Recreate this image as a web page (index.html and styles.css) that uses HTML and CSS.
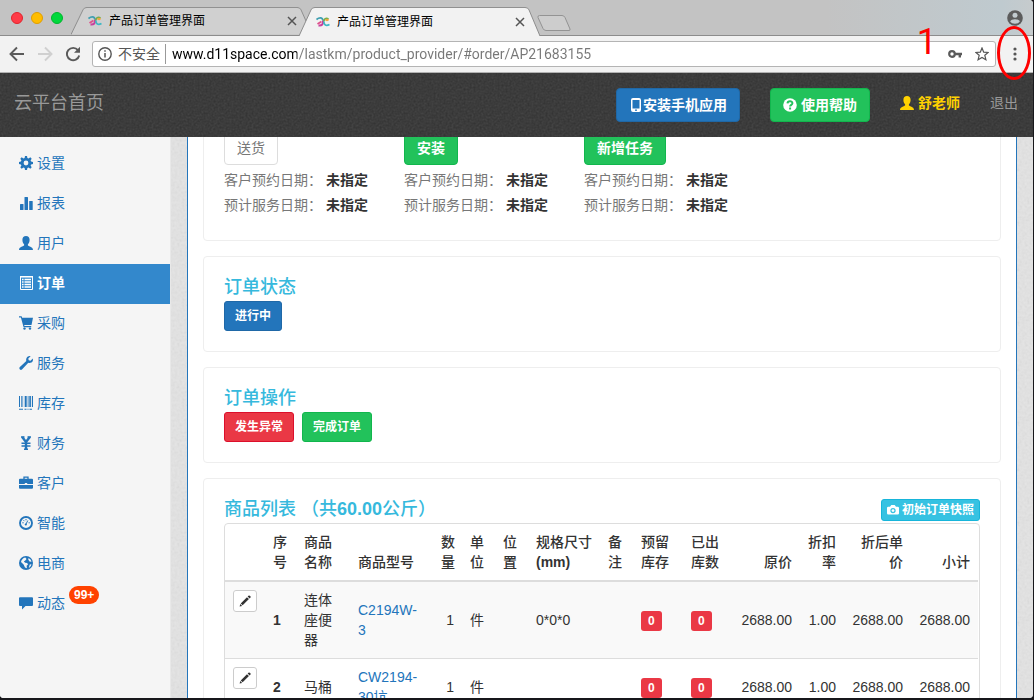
FILE: index.html
```html
<!DOCTYPE html>
<html lang="zh-CN">
  <head>
    <meta charset="utf-8">
    <title>产品订单管理界面</title>
    <link rel="stylesheet" href="styles.css">
  </head>
  <body>
    <svg class="sprite" aria-hidden="true">
      <symbol id="logo" viewBox="0 0 14 12">
        <path d="M.5 3.500C3 1.500 6.500 1 7 4.500" fill="none" stroke="#3f9fb0" stroke-width="1.800"/>
        <path d="M7 4.500C7.500 8 6 10 2.500 9.500" fill="none" stroke="#c8409e" stroke-width="2"/>
        <path d="M1.500 8l4-2.500" stroke="#e0508a" stroke-width="1.800"/>
        <path d="M12.500 3C10 1.500 7.800 3 7.800 5.500" fill="none" stroke="#6fae4f" stroke-width="1.800"/>
        <path d="M7.800 5.500C7.800 9 10 10.500 13.500 8.500" fill="none" stroke="#3db8c4" stroke-width="1.800"/>
        <path d="M9.500 4.500c1-1 2-1 3 0" fill="none" stroke="#f0a63a" stroke-width="1.800"/>
      </symbol>
      <symbol id="close" viewBox="0 0 10 10"><path d="M1 1l8 8M9 1l-8 8" stroke="#555" stroke-width="1.500"/></symbol>
      <symbol id="cog" viewBox="0 0 14 14">
        <path fill="currentColor" fill-rule="evenodd" d="M6 0h2l.4 1.900 1.200.5L11.300 1.300l1.400 1.400-1.100 1.700.5 1.200L14 6v2l-1.900.4-.5 1.200 1.100 1.700-1.400 1.400-1.700-1.100-1.200.5L8 14H6l-.4-1.900-1.200-.5-1.700 1.100-1.400-1.400 1.100-1.700-.5-1.200L0 8V6l1.900-.4.5-1.200L1.300 2.700l1.400-1.400 1.700 1.100 1.200-.5zM7 4.600a2.400 2.400 0 1 0 0 4.800 2.400 2.400 0 0 0 0-4.800z"/>
      </symbol>
      <symbol id="stats" viewBox="0 0 14 14"><g fill="currentColor"><rect x="1" y="8" width="3.500" height="6" rx=".5"/><rect x="5.500" y="1" width="3.500" height="13" rx=".5"/><rect x="10.200" y="5" width="3.500" height="9" rx=".5"/></g></symbol>
      <symbol id="user" viewBox="0 0 14 14"><path fill="currentColor" d="M7 0C4.700 0 3.400 1.500 3.400 3.700c0 2 .7 3.500 1.700 4.500v1.400C4 10.600 0 11 0 14h14c0-3-4-3.400-5.100-4.400V8.200c1-1 1.700-2.500 1.700-4.500C10.600 1.500 9.300 0 7 0z"/></symbol>
      <symbol id="list" viewBox="0 0 14 14">
        <path fill="none" stroke="currentColor" d="M1.500.5h12v13h-12z"/>
        <path stroke="currentColor" stroke-width="1.300" d="M3 3.500h1.600M5.500 3.500h6.500M3 6h1.600M5.500 6h6.500M3 8.500h1.600M5.500 8.500h6.500M3 11h1.600M5.500 11h6.500"/>
        <path stroke="currentColor" stroke-width="1.500" d="M1 .8h13"/>
      </symbol>
      <symbol id="cart" viewBox="0 0 14 14"><path fill="currentColor" d="M0 .3h2.600l.6 1.500H14L12.500 9H5.200l.3 1h6.700v1.200H4.600L1.900 1.600H0z"/><circle cx="5.500" cy="12.600" r="1.200" fill="currentColor"/><circle cx="11" cy="12.600" r="1.200" fill="currentColor"/></symbol>
      <symbol id="wrench" viewBox="0 0 14 14"><path fill="currentColor" d="M11.600.2 9.300 2.500l.4 1.800 1.800.4 2.300-2.300c.5 2-.2 3.500-1.500 4.200-1 .5-2 .5-3 .2L3.200 13.300c-.8.8-1.700.7-2.300.1-.7-.6-.8-1.500 0-2.300L7.300 5c-.3-1-.2-2.300.4-3.200C8.500.500 10-.3 11.600.2z"/></symbol>
      <symbol id="barcode" viewBox="0 0 14 14"><path fill="currentColor" d="M0 0h1v11H0zM2 0h.7v11H2zM3.500 0h.6v11h-.6zM5.700 0h2v11h-2zM8.700 0h.8v11h-.8zM10.300 0h1.600v11h-1.600zM12.900 0H14v11h-1.100zM0 12.700h4v1H0zM5.500 12.700h2v1h-2zM8.500 12.700h1v1h-1zM10.500 12.700H13v1h-2.500z"/></symbol>
      <symbol id="yen" viewBox="0 0 14 14"><path fill="none" stroke="currentColor" stroke-width="2.400" d="M3.200 1l3.800 5 3.800-5M7 6v8"/><path stroke="currentColor" stroke-width="1.500" d="M2 1h3.500M8.500 1H12M2.500 7.200h9M2.500 10h9M5 13.300h4"/></symbol>
      <symbol id="briefcase" viewBox="0 0 14 14"><path fill="none" stroke="currentColor" stroke-width="1.300" d="M5 3V1.200h4V3"/><path fill="currentColor" d="M1 2.800h12q1 0 1 1V8H8.200V7H5.800v1H0V3.800q0-1 1-1zM0 9h14v2.800q0 1-1 1H1q-1 0-1-1z"/></symbol>
      <symbol id="dashboard" viewBox="0 0 14 14"><circle cx="7" cy="7" r="6" fill="none" stroke="currentColor" stroke-width="1.900"/><path stroke="currentColor" d="M6.800 8.500 8.800 4.500M3.300 6.800h1.400M4.500 4.200l1 1M7 3v1.300M9.600 6.800h1.200"/><circle cx="6.800" cy="8.500" r="1.100" fill="currentColor"/></symbol>
      <symbol id="globe" viewBox="0 0 14 14"><path fill="currentColor" fill-rule="evenodd" d="M7 0a7 7 0 1 0 0 14A7 7 0 0 0 7 0zM6.300 1.400 7.500 3 6.300 4.500 4.800 5.600l1.400 1.200 2 .1.800 1.500-1.400 1.400.3 2.500-1.900-.8L4.600 8.400 2 6.100c.3-2.300 2-4.300 4.300-4.700zM9.500 2l2 1.500 1.100 2-1.800.2-1.500-1.900zM10.700 8.500l1.700-.2c-.3 1.700-1.300 3-2.600 3.700z"/></symbol>
      <symbol id="comment" viewBox="0 0 14 14"><path fill="currentColor" d="M1 1.300h12q1 0 1 1v6.800q0 1-1 1H6.500L3 13.500v-3.400H1q-1 0-1-1V2.300q0-1 1-1z"/></symbol>
      <symbol id="phone" viewBox="0 0 14 14"><path fill="currentColor" fill-rule="evenodd" d="M4 0h6q2 0 2 2v10q0 2-2 2H4q-2 0-2-2V2q0-2 2-2zM3.500 2v8.500h7V2zM7 11.300a.9.900 0 1 0 0 1.800.9.900 0 0 0 0-1.800z"/></symbol>
      <symbol id="question" viewBox="0 0 14 14"><circle cx="7" cy="7" r="6.800" fill="currentColor"/><path fill="none" stroke="#22c25b" stroke-width="2" d="M4.500 5.400C4.600 2.700 9.500 2.700 9.400 5.200 9.300 6.900 7.100 6.800 7.100 8.600M7.100 9.600v2"/></symbol>
      <symbol id="camera" viewBox="0 0 14 14"><path fill="currentColor" fill-rule="evenodd" d="M1.500 3.300h2L5 1.200h4l1.500 2.100h2q1.500 0 1.500 1.500v6q0 1.500-1.500 1.500h-11Q0 12.300 0 10.800v-6q0-1.500 1.500-1.500zM7 4.600a3.100 3.100 0 1 0 0 6.200 3.100 3.100 0 0 0 0-6.200z"/><circle cx="7" cy="7.700" r="1.600" fill="currentColor"/></symbol>
      <symbol id="pencil" viewBox="0 0 14 14"><path fill="currentColor" d="M11 .8q.8-.7 1.500 0l.8.8q.7.700 0 1.500l-.9.900-2.300-2.300zM9.300 2.500l2.300 2.300-7.300 7.300L2 9.800zM1.500 10.500l2.200 2.200-3 .8z"/></symbol>
    </svg>

    <div class="window">
      <!-- Browser tabs -->
      <header class="tab-strip">
        <div class="lights"><span class="light red"></span><span class="light yellow"></span><span class="light green"></span></div>
        <div class="tab">
          <svg class="tab-shape" viewBox="0 0 241 30" preserveAspectRatio="none"><path d="M0 29.500 12 3Q13 .5 16 .5H226Q229 .5 230 3L241 29.500" fill="#d0d0d0" stroke="#8c8c8c"/></svg>
          <svg class="favicon"><use href="#logo"/></svg>
          <span class="tab-title">产品订单管理界面</span>
          <button class="tab-close" aria-label="关闭"><svg><use href="#close"/></svg></button>
        </div>
        <div class="tab active">
          <svg class="tab-shape" viewBox="0 0 241 30" preserveAspectRatio="none"><path d="M0 30 12 3Q13 .5 16 .5H226Q229 .5 230 3L241 30" fill="#f2f2f2" stroke="#8c8c8c"/></svg>
          <svg class="favicon"><use href="#logo"/></svg>
          <span class="tab-title">产品订单管理界面</span>
          <button class="tab-close" aria-label="关闭"><svg><use href="#close"/></svg></button>
        </div>
        <button class="new-tab" aria-label="新标签页">
          <svg width="34" height="17" viewBox="0 0 34 17"><path d="M2.500.5H25Q27 .5 28 2.500L33 14Q33.500 15.500 32 15.500H9Q7 15.500 6 13.500L1 2.500Q.5.500 2.500.5z" fill="#cdcdcd" stroke="#939393"/></svg>
        </button>
        <button class="profile" aria-label="用户">
          <svg width="16" height="16" viewBox="0 0 16 16"><circle cx="8" cy="8" r="7.800" fill="#5c5c5c"/><circle cx="8" cy="5.300" r="2.500" fill="#c3ccd0"/><path d="M3.200 11.500C4 8.500 12 8.500 12.800 11.500 10.800 14.500 5.200 14.500 3.200 11.500z" fill="#c3ccd0"/></svg>
        </button>
      </header>

      <div class="toolbar">
        <button class="tool" aria-label="后退"><svg width="16" height="16" viewBox="0 0 16 16"><path d="M15 8H2M8 1.500 1.500 8 8 14.500" fill="none" stroke="#5a5a5a" stroke-width="1.900"/></svg></button>
        <button class="tool" aria-label="前进"><svg width="16" height="16" viewBox="0 0 16 16"><path d="M1 8h13M8 1.500 14.500 8 8 14.500" fill="none" stroke="#d0d0d0" stroke-width="1.900"/></svg></button>
        <button class="tool" aria-label="刷新"><svg width="16" height="16" viewBox="0 0 16 16"><path d="M13 4.200A6.200 6.200 0 1 0 14.200 9.500" fill="none" stroke="#5a5a5a" stroke-width="1.900"/><path d="M15 .8v6H9z" fill="#5a5a5a"/></svg></button>
        <div class="omnibox">
          <svg width="14" height="14" viewBox="0 0 14 14"><circle cx="7" cy="7" r="6.200" fill="none" stroke="#555" stroke-width="1.400"/><path d="M7 6v4.500M7 3.200v1.600" stroke="#555" stroke-width="1.500"/></svg>
          <label class="security" for="url">不安全</label>
          <input class="url" id="url" type="text" value="www.d11space.com/lastkm/product_provider/#order/AP21683155">
          <button class="tool small" aria-label="密码"><svg width="14" height="14" viewBox="0 0 14 14"><circle cx="4" cy="7" r="2.800" fill="none" stroke="#5a5a5a" stroke-width="2.200"/><path d="M7 7h7M11.800 7v3.500" stroke="#5a5a5a" stroke-width="2.400"/></svg></button>
          <button class="tool small" aria-label="收藏"><svg width="14" height="14" viewBox="0 0 14 14"><path d="M7 1 8.700 5.200l4.500.3-3.400 2.800 1.100 4.400L7 10.400l-3.900 2.300 1.100-4.400L.8 5.500l4.500-.3z" fill="none" stroke="#555" stroke-width="1.200"/></svg></button>
        </div>
        <button class="menu" aria-label="菜单">
          <svg width="4" height="14" viewBox="0 0 4 14"><g fill="#555"><circle cx="2" cy="2" r="1.600"/><circle cx="2" cy="7" r="1.600"/><circle cx="2" cy="12" r="1.600"/></g></svg>
          <span class="mark-ring"></span>
          <span class="mark-number">1</span>
        </button>
      </div>

      <nav class="navbar">
        <a class="brand" href="#">云平台首页</a>
        <button class="btn btn-primary"><svg class="icon"><use href="#phone"/></svg>安装手机应用</button>
        <button class="btn btn-success"><svg class="icon spaced"><use href="#question"/></svg>使用帮助</button>
        <a class="account" href="#user"><svg class="icon spaced"><use href="#user"/></svg>舒老师</a>
        <a class="logout" href="#logout">退出</a>
      </nav>

      <div class="page">
        <aside class="sidebar">
          <a href="#setting"><svg class="icon spaced"><use href="#cog"/></svg>设置</a>
          <a href="#report"><svg class="icon spaced"><use href="#stats"/></svg>报表</a>
          <a href="#users"><svg class="icon spaced"><use href="#user"/></svg>用户</a>
          <a class="active" href="#order"><svg class="icon spaced"><use href="#list"/></svg>订单</a>
          <a href="#purchase"><svg class="icon spaced"><use href="#cart"/></svg>采购</a>
          <a href="#service"><svg class="icon spaced"><use href="#wrench"/></svg>服务</a>
          <a href="#stock"><svg class="icon spaced"><use href="#barcode"/></svg>库存</a>
          <a href="#finance"><svg class="icon spaced"><use href="#yen"/></svg>财务</a>
          <a href="#customer"><svg class="icon spaced"><use href="#briefcase"/></svg>客户</a>
          <a href="#smart"><svg class="icon spaced"><use href="#dashboard"/></svg>智能</a>
          <a href="#shop"><svg class="icon spaced"><use href="#globe"/></svg>电商</a>
          <a href="#news"><svg class="icon spaced"><use href="#comment"/></svg>动态<span class="count">99+</span></a>
        </aside>

        <main class="content">
          <section class="panel tasks">
            <div class="task">
              <button class="btn btn-default">送货</button>
              <p>客户预约日期： <strong>未指定</strong></p>
              <p>预计服务日期： <strong>未指定</strong></p>
            </div>
            <div class="task">
              <button class="btn btn-success">安装</button>
              <p>客户预约日期： <strong>未指定</strong></p>
              <p>预计服务日期： <strong>未指定</strong></p>
            </div>
            <div class="task">
              <button class="btn btn-success">新增任务</button>
              <p>客户预约日期： <strong>未指定</strong></p>
              <p>预计服务日期： <strong>未指定</strong></p>
            </div>
          </section>

          <section class="panel">
            <h4>订单状态</h4>
            <div class="actions"><button class="btn btn-sm btn-primary">进行中</button></div>
          </section>

          <section class="panel">
            <h4>订单操作</h4>
            <div class="actions">
              <button class="btn btn-sm btn-danger">发生异常</button>
              <button class="btn btn-sm btn-success">完成订单</button>
            </div>
          </section>

          <section class="panel">
            <div class="panel-head">
              <h4>商品列表 （共<strong>60.00</strong>公斤）</h4>
              <button class="btn btn-xs btn-info"><svg class="icon"><use href="#camera"/></svg>初始订单快照</button>
            </div>
            <div class="table-box">
              <table>
                <colgroup>
                  <col class="c-edit"><col class="c-no"><col class="c-name"><col class="c-model"><col class="c-qty"><col class="c-unit"><col class="c-unit"><col class="c-spec"><col class="c-unit"><col class="c-stock"><col class="c-stock"><col class="c-price"><col class="c-rate"><col class="c-price"><col class="c-price">
                </colgroup>
                <thead>
                  <tr>
                    <th></th><th>序号</th><th>商品名称</th><th>商品型号</th><th>数量</th><th>单位</th><th>位置</th><th>规格尺寸<strong>(mm)</strong></th><th>备注</th><th>预留库存</th><th>已出库数</th><th class="num">原价</th><th class="num">折扣率</th><th class="num">折后单价</th><th class="num">小计</th>
                  </tr>
                </thead>
                <tbody>
                  <tr>
                    <td class="edit"><button class="btn btn-xs btn-edit" aria-label="编辑"><svg class="icon"><use href="#pencil"/></svg></button></td>
                    <td><strong>1</strong></td><td>连体座便器</td><td class="model"><a href="#C2194W-3">C2194W-3</a></td><td class="num">1</td><td>件</td><td></td><td>0*0*0</td><td></td>
                    <td><span class="label">0</span></td><td><span class="label">0</span></td>
                    <td class="num">2688.00</td><td class="num">1.00</td><td class="num">2688.00</td><td class="num">2688.00</td>
                  </tr>
                  <tr>
                    <td class="edit"><button class="btn btn-xs btn-edit" aria-label="编辑"><svg class="icon"><use href="#pencil"/></svg></button></td>
                    <td><strong>2</strong></td><td>马桶</td><td class="model"><a href="#CW2194">CW2194-30坑</a></td><td class="num">1</td><td>件</td><td></td><td></td><td></td>
                    <td><span class="label">0</span></td><td><span class="label">0</span></td>
                    <td class="num">2688.00</td><td class="num">1.00</td><td class="num">2688.00</td><td class="num">2688.00</td>
                  </tr>
                </tbody>
              </table>
            </div>
          </section>
        </main>
      </div>
    </div>
  </body>
</html>
```

FILE: styles.css
```css
* {
  box-sizing: border-box;
}

body {
  margin: 0;
  height: 100vh;
  padding: 0 1px 2px 0;
  overflow: hidden;
  background: #17171b;
  color: #333;
  font: 14px/20px "Liberation Sans", "Noto Sans CJK SC", sans-serif;
}

button {
  padding: 0;
  border: 0;
  background: none;
  font: inherit;
  cursor: pointer;
}

a {
  color: #2375bb;
  text-decoration: none;
}

p, h4 {
  margin: 0;
}

.sprite {
  position: absolute;
  width: 0;
  height: 0;
}

.icon {
  flex: none;
  width: 14px;
  height: 14px;
}

.icon.spaced {
  margin-right: 4px;
}

.window {
  display: flex;
  flex-direction: column;
  height: 100%;
  overflow: hidden;
  border-radius: 0 4px 4px 4px;
  background: #f2f2f2;
}

/* Tabs */
.tab-strip {
  display: flex;
  flex: none;
  align-items: flex-end;
  height: 36px;
  border-bottom: 1px solid #8c8c8c;
  background: linear-gradient(to right, #c3c3c3 80%, #bfcacf 97%, #c6cbcd);
}

.lights {
  display: flex;
  gap: 8px;
  padding: 0 8px 11px 11px;
}

.light {
  width: 12px;
  height: 12px;
  border: 1px solid #e0242c;
  border-radius: 50%;
  background: #ff3b47;
}

.light.yellow {
  border-color: #e09d00;
  background: #ffbd00;
}

.light.green {
  border-color: #00b42d;
  background: #00d83c;
}

.tab {
  position: relative;
  display: flex;
  align-items: center;
  width: 241px;
  height: 28px;
  padding: 0 15px 0 17px;
}

.tab.active {
  z-index: 1;
  height: 29px;
  margin: 0 0 -1px -13px;
}

.tab-shape {
  position: absolute;
  top: 0;
  left: 0;
  width: 100%;
  height: 100%;
}

.favicon {
  position: relative;
  width: 14px;
  height: 12px;
}

.tab-title {
  position: relative;
  flex: 1;
  margin-left: 7px;
  color: #000;
  font-size: 12px;
}

.tab-close {
  position: relative;
  display: flex;
}

.tab-close svg {
  width: 10px;
  height: 10px;
}

.new-tab {
  display: flex;
  margin: 0 auto 3px -3px;
}

.profile {
  display: flex;
  margin: 0 10px 9px 0;
}

/* Toolbar */
.toolbar {
  display: flex;
  flex: none;
  align-items: center;
  gap: 12px;
  height: 37px;
  padding: 0 16px 0 9px;
  border-bottom: 1px solid #b2b2b2;
}

.tool {
  display: flex;
}

.omnibox {
  display: flex;
  flex: 1;
  align-items: center;
  height: 26px;
  margin-left: -1px;
  padding: 0 6px 0 5px;
  border: 1px solid #b4b4b4;
  border-radius: 3px;
  background: #fff;
}

.security {
  margin: 0 5px 0 6px;
  color: #555;
}

/* The host is black, the rest of the address grey */
.url {
  flex: 1;
  height: 20px;
  padding: 0 0 0 6px;
  border: 0;
  border-left: 1px solid #999;
  outline: 0;
  background: linear-gradient(to right, #000 131px, #777 131px);
  -webkit-background-clip: text;
  background-clip: text;
  color: transparent;
  font: 14px/20px Roboto, "Liberation Sans", sans-serif;
}

.tool.small {
  margin-left: 13px;
}

.menu {
  position: relative;
  display: flex;
  margin-left: 5px;
}

.mark-ring {
  position: absolute;
  top: -21px;
  left: -16px;
  width: 34px;
  height: 54px;
  border: 3px solid #f00;
  border-radius: 50%;
  z-index: 2;
}

.mark-number {
  position: absolute;
  right: 80px;
  bottom: -1px;
  color: #f00;
  font: 36px/40px Roboto, sans-serif;
}

/* Top navigation */
.navbar {
  display: flex;
  flex: none;
  align-items: center;
  height: 64px;
  padding: 0 15px 0 14px;
  background: #303030 url("data:image/svg+xml,%3Csvg xmlns='http://www.w3.org/2000/svg' width='100' height='100'%3E%3Cfilter id='n'%3E%3CfeTurbulence type='fractalNoise' baseFrequency='.5' stitchTiles='stitch'/%3E%3CfeColorMatrix type='saturate' values='0'/%3E%3C/filter%3E%3Crect width='100' height='100' filter='url(%23n)' opacity='.16'/%3E%3C/svg%3E");
}

.brand {
  margin-right: auto;
  padding-bottom: 4px;
  color: #999;
  font-size: 18px;
}

.navbar .btn {
  margin-right: 30px;
}

.account {
  display: flex;
  align-items: center;
  margin-right: 30px;
  padding-bottom: 4px;
  color: #ffd200;
  font-weight: bold;
}

.logout {
  padding-bottom: 4px;
  color: #999;
}

/* Buttons */
.btn {
  display: inline-flex;
  align-items: center;
  height: 34px;
  padding: 0 12px;
  border: 1px solid transparent;
  border-radius: 4px;
  color: #fff;
  font-weight: bold;
  white-space: nowrap;
}

.btn-sm {
  height: 30px;
  padding: 0 10px;
  border-radius: 3px;
  font-size: 12px;
}

.btn-xs {
  gap: 3px;
  height: 22px;
  padding: 0 5px;
  border-radius: 3px;
  font-size: 12px;
}

.btn-xs .icon {
  width: 12px;
  height: 12px;
}

.btn-default {
  border-color: #ddd;
  background: #fff;
  color: #777;
  font-weight: normal;
}

.btn-primary {
  border-color: #1f68a7;
  background: #2375bb;
}

.btn-success {
  border-color: #11b64d;
  background: #22c25b;
}

.btn-danger {
  border-color: #dc0f2b;
  background: #ea3845;
}

.btn-info {
  border-color: #17b5da;
  background: #36c2e2;
}

.btn-edit {
  border-color: #ccc;
  background: #fff;
  color: #333;
}

/* Page */
.page {
  display: flex;
  flex: 1;
  min-height: 0;
  background: #e4e4e4 url("data:image/svg+xml,%3Csvg xmlns='http://www.w3.org/2000/svg' width='100' height='100'%3E%3Cfilter id='n'%3E%3CfeTurbulence type='fractalNoise' baseFrequency='.4' stitchTiles='stitch'/%3E%3CfeColorMatrix type='saturate' values='0'/%3E%3C/filter%3E%3Crect width='100' height='100' filter='url(%23n)' opacity='.2'/%3E%3C/svg%3E");
}

.sidebar {
  flex: none;
  width: 171px;
  padding-top: 7px;
  border-right: 1px solid #e8e8e8;
  background: #f5f5f5;
}

.sidebar a {
  display: flex;
  align-items: center;
  height: 40px;
  padding: 0 0 2px 19px;
}

.sidebar .active {
  background: #3388cc;
  color: #fff;
  font-weight: bold;
}

.count {
  align-self: flex-start;
  margin: 2px 0 0 4px;
  padding: 0 5px;
  border-radius: 9px;
  background: #ff4200;
  color: #fff;
  font-size: 12px;
  font-weight: bold;
  line-height: 18px;
}

/* Scrolled down a little, so the first panel starts under the navbar */
.content {
  flex: 1;
  min-width: 0;
  margin: 0 16px;
  padding: 0 15px;
  overflow: hidden;
  border: solid #2375bb;
  border-width: 0 1px;
  background: #fff;
}

.panel {
  margin-bottom: 15px;
  padding: 20px;
  border: 1px solid #eee;
  border-radius: 4px;
}

.tasks {
  display: flex;
  margin-top: -27px;
}

.task {
  width: 180px;
  padding-bottom: 2px;
  color: #777;
  line-height: 25px;
}

.task .btn {
  margin-bottom: 3px;
  vertical-align: top;
}

.task strong {
  color: #333;
}

h4 {
  padding-bottom: 4px;
  color: #36b9dd;
  font-size: 18px;
  font-weight: 500;
  line-height: 20px;
}

.actions {
  display: flex;
  gap: 8px;
}

.panel-head {
  display: flex;
  align-items: flex-start;
  justify-content: space-between;
}

/* Products */
.table-box {
  padding-right: 1px;
  overflow: hidden;
  border: 1px solid #ddd;
  border-radius: 4px;
}

table {
  width: 100%;
  table-layout: fixed;
  border-collapse: separate;
  border-spacing: 0;
}

th, td {
  padding: 8px 7px 8px 8px;
  border-bottom: 1px solid #ddd;
  text-align: left;
}

th {
  border-bottom-width: 2px;
  font-weight: 500;
  vertical-align: bottom;
}

.num {
  padding: 8px;
  text-align: right;
}

.model {
  padding-right: 16px;
}

.edit {
  vertical-align: top;
}

.edit .btn {
  vertical-align: top;
}

tbody tr:nth-child(odd) {
  background: #f9f9f9;
}

.label {
  display: inline-block;
  padding: 0 7px;
  border-radius: 3px;
  background: #ea3845;
  color: #fff;
  font-size: 12px;
  font-weight: bold;
  vertical-align: middle;
}

.c-edit { width: 40px; }
.c-no { width: 31px; }
.c-name { width: 54px; }
.c-qty { width: 29px; }
.c-unit { width: 33px; }
.c-spec { width: 72px; }
.c-stock { width: 50px; }
.c-price { width: 67px; }
.c-rate { width: 44px; }
```
